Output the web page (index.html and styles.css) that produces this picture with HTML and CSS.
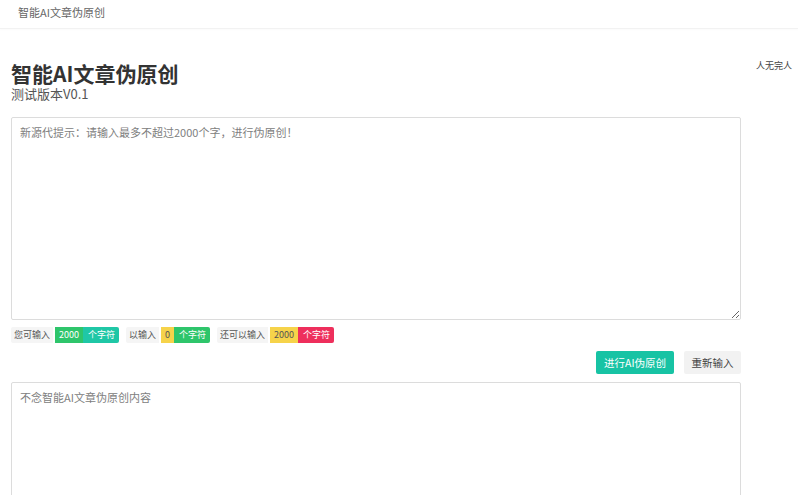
FILE: index.html
```html
<!DOCTYPE html>
<html lang="zh-CN">
<head>
<meta charset="utf-8">
<title>智能AI文章伪原创</title>
<link rel="stylesheet" href="styles.css">
</head>
<body>
<header class="topbar"><span class="brand">智能AI文章伪原创</span></header>
<div class="layout">
  <main class="main">
    <h1 class="title">智能AI文章伪原创</h1>
    <div class="subtitle">测试版本V0.1</div>
    <textarea class="box box-in" placeholder="新源代提示：请输入最多不超过2000个字，进行伪原创！"></textarea>
    <div class="counts">
      <span class="badge"><span class="lbl">您可输入</span><span class="seg green">2000</span><span class="seg teal">个字符</span></span>
      <span class="badge"><span class="lbl">以输入</span><span class="seg yellow">0</span><span class="seg green">个字符</span></span>
      <span class="badge"><span class="lbl">还可以输入</span><span class="seg yellow">2000</span><span class="seg red">个字符</span></span>
    </div>
    <div class="actions">
      <button class="btn btn-primary">进行AI伪原创</button>
      <button class="btn btn-light">重新输入</button>
    </div>
    <textarea class="box box-out" placeholder="不念智能AI文章伪原创内容"></textarea>
  </main>
  <aside class="side">人无完人</aside>
</div>
</body>
</html>
```
FILE: styles.css
```css
* { box-sizing: border-box; }
html, body { margin: 0; padding: 0; background: #fff; }
body {
  font-family: "Noto Sans CJK SC", "Liberation Sans", sans-serif;
  color: #333;
  height: 495px;
  overflow: hidden;
}
.topbar {
  height: 29px;
  border-bottom: 1px solid #f2f2f2;
  padding: 4px 0 0 18px;
  box-shadow: 0 1px 2px rgba(0,0,0,0.02);
}
.brand { display: block; font-size: 11px; line-height: 16px; color: #666; }
.layout { display: flex; align-items: flex-start; }
.main { width: 741px; padding-left: 11px; padding-top: 32px; }
.title {
  margin: 0;
  font-size: 21px;
  line-height: 24px;
  font-weight: 700;
  color: #333;
}
.subtitle { font-size: 13px; line-height: 16px; color: #555; margin-top: 1px; }
.box {
  display: block;
  width: 730px;
  border: 1px solid #dcdcdc;
  border-radius: 2px;
  padding: 6px 8px;
  font-family: inherit;
  font-size: 11px;
  line-height: 16px;
  color: #333;
  resize: vertical;
  outline: none;
}
.box::placeholder { color: #808080; }
.box-in { height: 203px; margin-top: 15px; }
.box-out { height: 125px; margin-top: 8px; }
.counts { display: flex; gap: 7px; margin-top: 7px; height: 16px; }
.badge { display: inline-flex; height: 16px; font-size: 9px; line-height: 16px; white-space: nowrap; }
.lbl { background: #f5f5f5; color: #555; padding: 0 3px; margin-right: 2px; border-radius: 2px 0 0 2px; }
.seg { padding: 0 4px; color: #fff; }
.seg:last-child { border-radius: 0 2px 2px 0; padding: 0 4px 0 5px; }
.green { background: #2ec56b; }
.teal { background: #1fc7a6; }
.yellow { background: #f6d34a; color: #555; }
.red { background: #ee2f5c; }
.actions { display: flex; justify-content: flex-end; gap: 10px; margin-top: 8px; }
.btn {
  height: 23px;
  border: none;
  border-radius: 2px;
  font-family: inherit;
  font-size: 10.5px;
  line-height: 23px;
  padding: 0;
  white-space: nowrap;
  cursor: pointer;
}
.btn-primary { background: #17c3a4; color: #fff; width: 78px; }
.btn-light { background: #f2f2f2; color: #444; width: 57px; }
.side {
  padding-top: 31px;
  margin-left: 15px;
  font-size: 9px;
  line-height: 12px;
  color: #444;
}
```
